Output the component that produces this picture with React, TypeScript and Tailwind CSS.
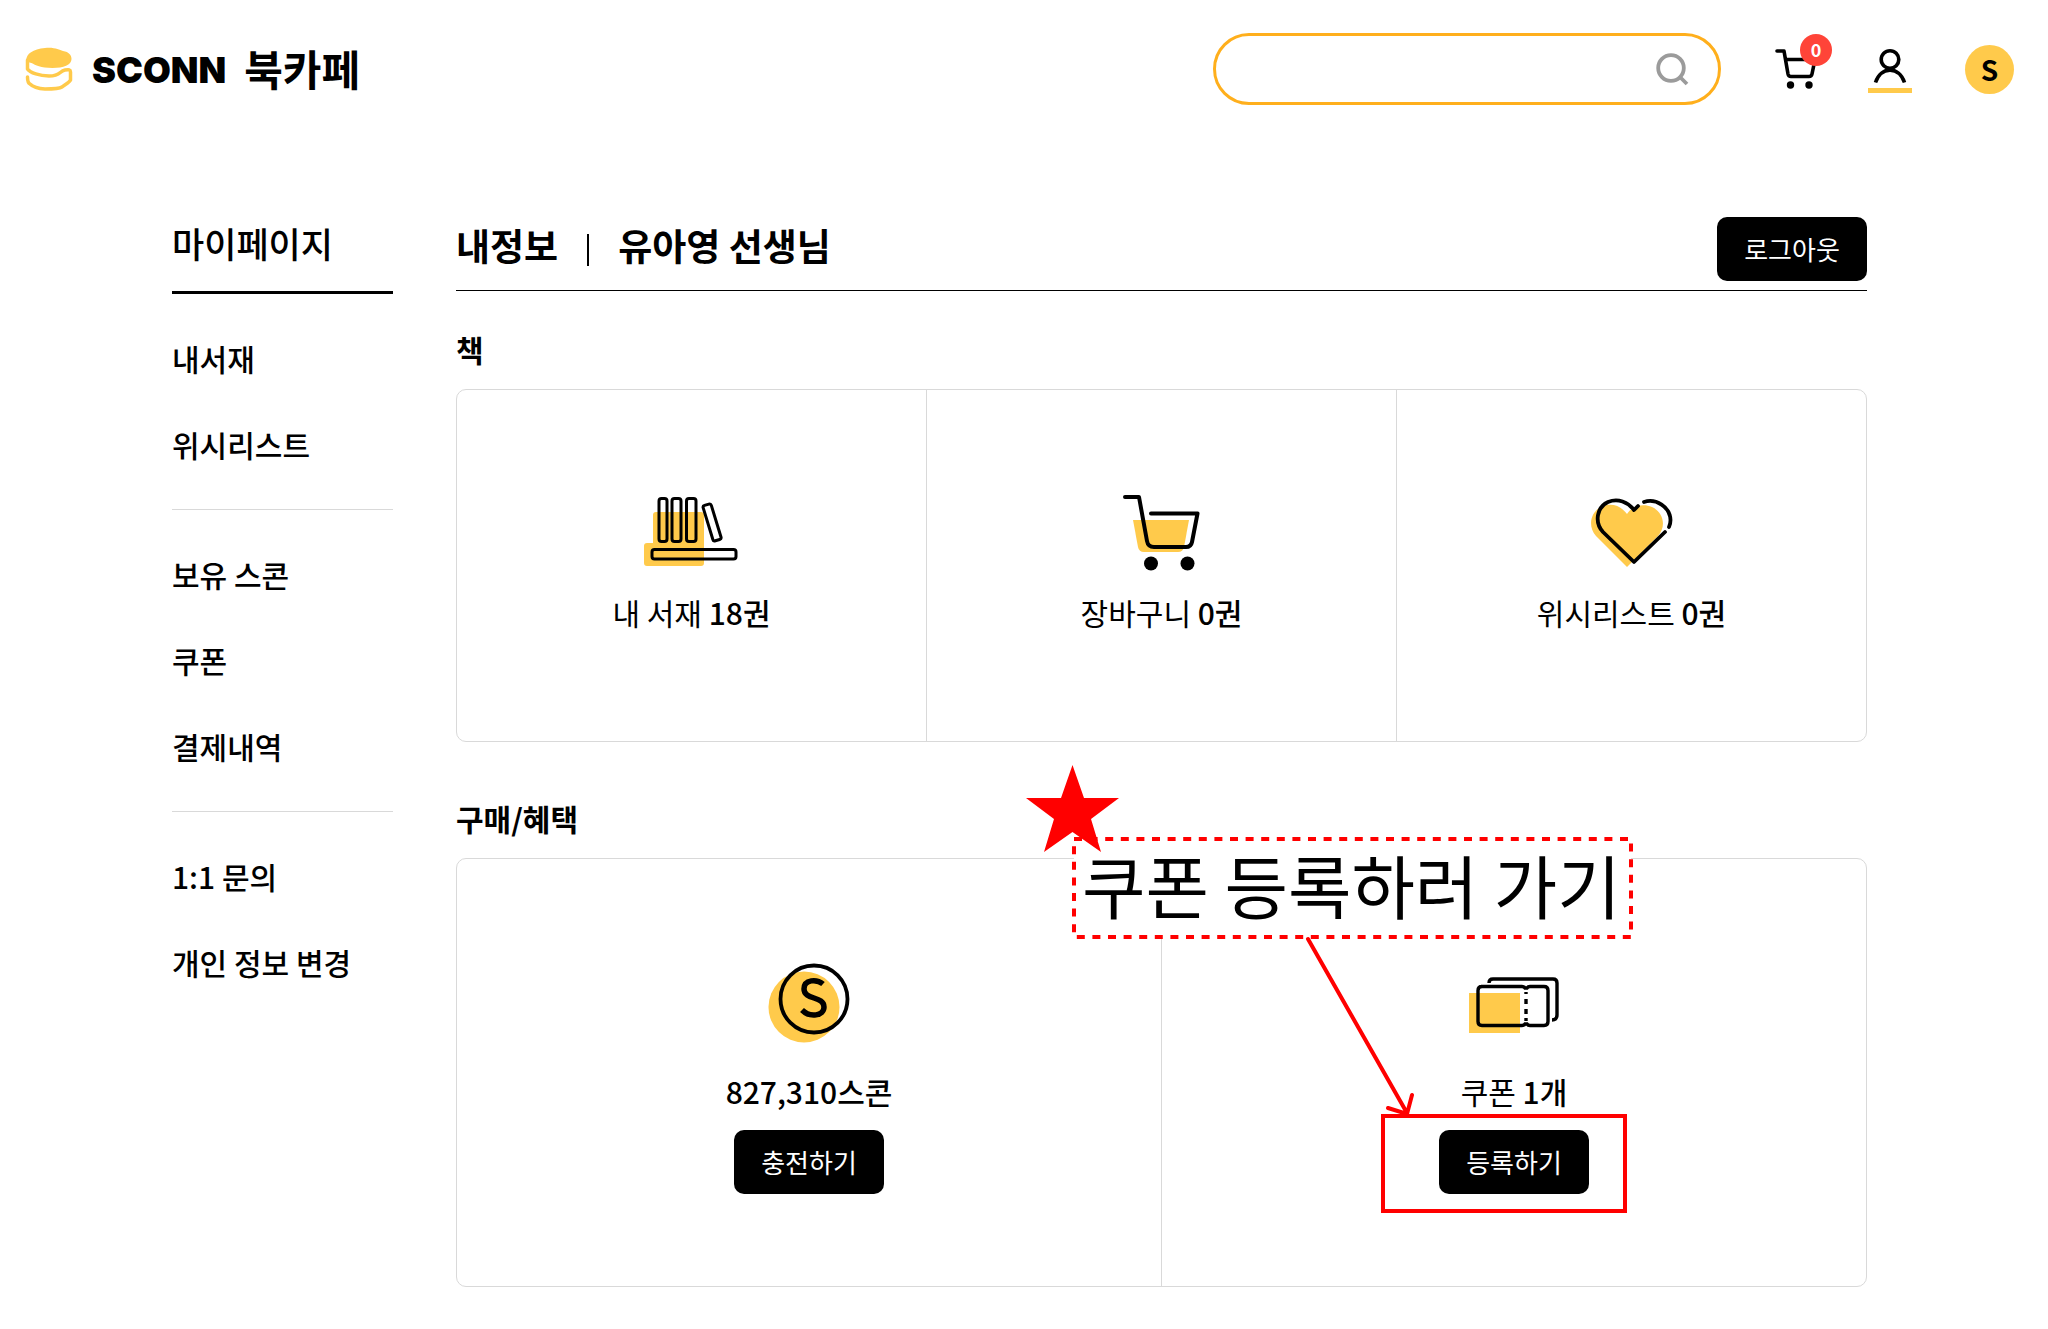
import React from "react";

const YELLOW = "#ffca4b";

function LogoMark() {
  return (
    <svg width="48" height="46" viewBox="0 0 48 46" fill="none" aria-hidden="true">
      <path d="M1.500 13C1 7 8 2 20 1c10-1 14 2 18 3 6 1 8.500 4 8.500 8 0 6-8 9-19 9-12 0-17-3-21-5-3-1-4.500 0-5-3z" fill={YELLOW} />
      <path d="M2.500 13v9C5 26 15 28.500 24 29c12 0 10-5 16-6 4-.5 5.500-.5 5.500 2v8c-1.500 3-6.500 5-8.500 7-3 2-11 2-17 2-8-.5-12-2-15-5-2-1-2.500-3-2.500-7" stroke={YELLOW} strokeWidth="3.500" strokeLinecap="round" strokeLinejoin="round" />
    </svg>
  );
}

function HeaderCart() {
  return (
    <svg width="44" height="42" viewBox="0 0 44 42" fill="none" stroke="#000" strokeWidth="3.600" strokeLinecap="round" strokeLinejoin="round" aria-hidden="true">
      <path d="M3 3h7l4 23q.5 2.500 3 2.500h18q2.500 0 3-2.500l3-14.500H13" />
      <circle cx="16.500" cy="37" r="3.700" fill="#000" stroke="none" />
      <circle cx="35" cy="37" r="3.700" fill="#000" stroke="none" />
    </svg>
  );
}

function PersonIcon() {
  return (
    <svg width="34" height="36" viewBox="0 0 34 36" fill="none" stroke="#000" strokeWidth="3.600" aria-hidden="true">
      <circle cx="17" cy="11.500" r="8.800" />
      <path d="M2.500 34.500C8 18 26 18 31.500 34.500" />
    </svg>
  );
}

function BooksIcon() {
  return (
    <svg width="98" height="72" viewBox="0 0 98 72" fill="none" aria-hidden="true">
      <path d="M10 18q0-3 3-3h45q3 0 3 3v48q0 3-3 3H4q-3 0-3-3V49q0-3 3-3h6z" fill={YELLOW} />
      <g stroke="#000" strokeWidth="3">
        <rect x="16" y="1.500" width="8" height="43" rx="2.500" />
        <rect x="29" y="1.500" width="9" height="43" rx="2.500" />
        <rect x="43.500" y="1.500" width="9.500" height="43" rx="2.500" />
        <rect x="65" y="7" width="8.500" height="37" rx="2" transform="rotate(-17 69 26)" />
        <rect x="9" y="52.500" width="84" height="9.500" rx="2.500" />
      </g>
    </svg>
  );
}

function CartIcon() {
  return (
    <svg width="80" height="78" viewBox="0 0 80 78" fill="none" aria-hidden="true">
      <path d="M11 26h56l-5 27q-1 5-6 5H22q-5 0-6-5z" fill={YELLOW} />
      <path d="M3 3h14l8 44q1 6 7 6h32q5 0 6-5l5.500-28.500H29" stroke="#000" strokeWidth="4" strokeLinecap="round" strokeLinejoin="round" />
      <circle cx="29" cy="69.500" r="7" fill="#000" />
      <circle cx="65.500" cy="69.500" r="7" fill="#000" />
    </svg>
  );
}

function HeartIcon() {
  return (
    <svg width="84" height="72" viewBox="0 0 84 72" fill="none" aria-hidden="true">
      <path d="M37 70L6 39C-3 29 1 14 12 9.500c10-4 19-.5 25 7.500 5-8 16-11 25-7 11 5 15 19 6 29z" fill={YELLOW} />
      <path d="M75 35L44 65 13 35C4 25 7 10 18 5c10-4 20 0 26 8l4-4" stroke="#000" strokeWidth="3.800" strokeLinecap="round" strokeLinejoin="round" />
      <path d="M54 5c12-4 26 5 26.500 18q0 4-1.500 7" stroke="#000" strokeWidth="3.800" strokeLinecap="round" />
    </svg>
  );
}

function CoinIcon() {
  return (
    <svg width="82" height="80" viewBox="0 0 82 80" fill="none" aria-hidden="true">
      <circle cx="36" cy="44" r="35.500" fill={YELLOW} />
      <circle cx="46" cy="36" r="33.500" stroke="#000" strokeWidth="3.800" />
      <path d="M55 21c-6-5-19-5-19 5 0 11 20 7 20 18 0 9-14 11-22 3" stroke="#000" strokeWidth="5.500" />
    </svg>
  );
}

function CouponIcon() {
  return (
    <svg width="90" height="58" viewBox="0 -3 90 58" fill="none" aria-hidden="true" className="overflow-visible">
      <rect x="0" y="16" width="51" height="40" fill={YELLOW} />
      <g stroke="#000" strokeWidth="3.400">
        <path d="M12 9.500h41q2 0 3 1.500h2q1-1.500 3-1.500h14q4 0 4 4v31q0 4-4 4H61q-2 0-3-1.500h-2q-1 1.500-3 1.500H13q-4 0-4-4v-31q0-4 4-4" />
        <path d="M20 6q0-4 4-4h60q4 0 4 4v32q0 5-5 5" />
        <path d="M57 15v2M57 22v5M57 32v5M57 41v3" />
      </g>
    </svg>
  );
}

function StatCell({ icon, label, value, children }: { icon: React.ReactNode; label?: string; value: string; children?: React.ReactNode }) {
  return (
    <div className={`relative flex flex-1 flex-col items-center border-l border-[#d9d9d9] first:border-l-0 ${children ? "gap-[26px]" : "gap-[17px]"}`}>
      <div className="flex h-20 items-center justify-center">{icon}</div>
      <div className="flex flex-col items-center gap-[17px]">
        <p className="text-[30px] leading-11">
          {label && <span>{label} </span>}
          <strong className="font-medium">{value}</strong>
        </p>
        {children}
      </div>
    </div>
  );
}

const buttonClass =
  "flex h-16 w-[150px] items-center justify-center rounded-[10px] bg-black pb-0.5 text-[26px] text-white";

const menu = [
  ["내서재", "위시리스트"],
  ["보유 스콘", "쿠폰", "결제내역"],
  ["1:1 문의", "개인 정보 변경"],
];

function Header() {
  return (
    <header className="flex h-[138px] items-center pr-[34px] pl-[25px]">
      <a href="#" className="flex items-center pt-0.5">
        <LogoMark />
        <span className="ml-[19px] font-[Inter] text-[36px] font-black">SCONN</span>
        <span className="ml-[18px] pb-1 text-[42px] leading-none font-bold">북카페</span>
      </a>
      <form className="ml-auto flex h-[72px] w-[508px] items-center rounded-full border-3 border-[#ffaf1c] pr-[29px] pl-8">
        <input type="search" aria-label="검색" className="min-w-0 flex-1 text-2xl outline-none" />
        <button type="button" aria-label="검색하기">
          <svg width="34" height="34" viewBox="0 0 34 34" fill="none" stroke="#9b9b9b" strokeWidth="3.800" aria-hidden="true">
            <circle cx="16" cy="16" r="12.800" />
            <path d="M25 25l7 7" />
          </svg>
        </button>
      </form>
      <button type="button" aria-label="장바구니" className="relative ml-[53px]">
        <HeaderCart />
        <span className="absolute -top-[14px] left-[26px] flex size-8 items-center justify-center rounded-full bg-[#ff4438] pb-0.5 text-lg font-bold text-white">0</span>
      </button>
      <button type="button" aria-label="내 정보" className="ml-[50px] flex w-11 flex-col items-center pt-0.5">
        <PersonIcon />
        <span className="mt-1 h-[5px] w-full bg-[#ffca4b]" />
      </button>
      <button type="button" aria-label="스콘" className="ml-[53px] flex size-[49px] items-center justify-center rounded-full bg-[#ffca4b] text-[28px] font-bold">S</button>
    </header>
  );
}

function Sidebar() {
  return (
    <nav className="w-[221px] shrink-0">
      <h2 className="h-[77px] border-b-3 border-black text-[35px] leading-[52px] font-medium">마이페이지</h2>
      {menu.map((group, i) => (
        <ul key={i} className="flex flex-col gap-[42px] border-[#d9d9d9] pt-[42px] pb-[43px] not-last:border-b">
          {group.map((item) => (
            <li key={item} className="h-11 text-[30px] leading-11 font-medium">
              <a href="#">{item}</a>
            </li>
          ))}
        </ul>
      ))}
    </nav>
  );
}

function CouponNote() {
  return (
    <div className="pointer-events-none absolute -top-[94px] -left-[137px]">
      <svg width="620" height="360" viewBox="0 0 620 360" fill="none" aria-hidden="true">
        <rect x="49" y="74" width="557" height="98" fill="#fff" stroke="#ff0000" strokeWidth="4" strokeDasharray="8 7.600" />
        <path d="M47.500 0L59 33h35L66 54l10 33-28.500-20L19 87l10-33L1 33h35z" fill="#ff0000" />
        <path d="M283 174l99 174M363 343l19 6 5-19" stroke="#ff0000" strokeWidth="4" strokeLinecap="round" />
      </svg>
      <p className="absolute top-[73px] left-[57px] text-[69px] leading-[92px] whitespace-nowrap">쿠폰 등록하러 가기</p>
    </div>
  );
}

export default function App() {
  return (
    <div className="min-h-screen bg-white font-['Noto_Sans_CJK_KR',sans-serif] text-black">
      <Header />
      <div className="flex gap-[63px] pt-[79px] pr-[181px] pb-10 pl-[172px]">
        <Sidebar />
        <main className="min-w-0 flex-1">
          <div className="flex h-[74px] justify-between border-b border-black">
            <div className="flex h-[58px] items-center text-[37px] font-bold">
              <h1>내정보</h1>
              <span className="mx-[29px] mt-2 h-8 w-0.5 bg-black" />
              <span>유아영 선생님</span>
            </div>
            <button type="button" className={buttonClass}>로그아웃</button>
          </div>
          <section>
            <h2 className="mt-9 text-[30px] leading-11 font-bold">책</h2>
            <div className="mt-[18px] flex h-[353px] rounded-[10px] border border-[#d9d9d9] *:pt-[103px]">
              <StatCell icon={<BooksIcon />} label="내 서재" value="18권" />
              <StatCell icon={<CartIcon />} label="장바구니" value="0권" />
              <StatCell icon={<HeartIcon />} label="위시리스트" value="0권" />
            </div>
          </section>
          <section>
            <h2 className="mt-[54px] text-[30px] leading-11 font-bold">구매/혜택</h2>
            <div className="mt-[18px] flex h-[429px] rounded-[10px] border border-[#d9d9d9] *:pt-[104px]">
              <StatCell icon={<CoinIcon />} value="827,310스콘">
                <button type="button" className={buttonClass}>충전하기</button>
              </StatCell>
              <StatCell icon={<CouponIcon />} label="쿠폰" value="1개">
                <CouponNote />
                <div className="relative">
                  <button type="button" className={buttonClass}>등록하기</button>
                  <span className="pointer-events-none absolute -top-4 -right-[38px] -bottom-[19px] -left-[58px] border-4 border-[#ff0000]" />
                </div>
              </StatCell>
            </div>
          </section>
        </main>
      </div>
    </div>
  );
}
